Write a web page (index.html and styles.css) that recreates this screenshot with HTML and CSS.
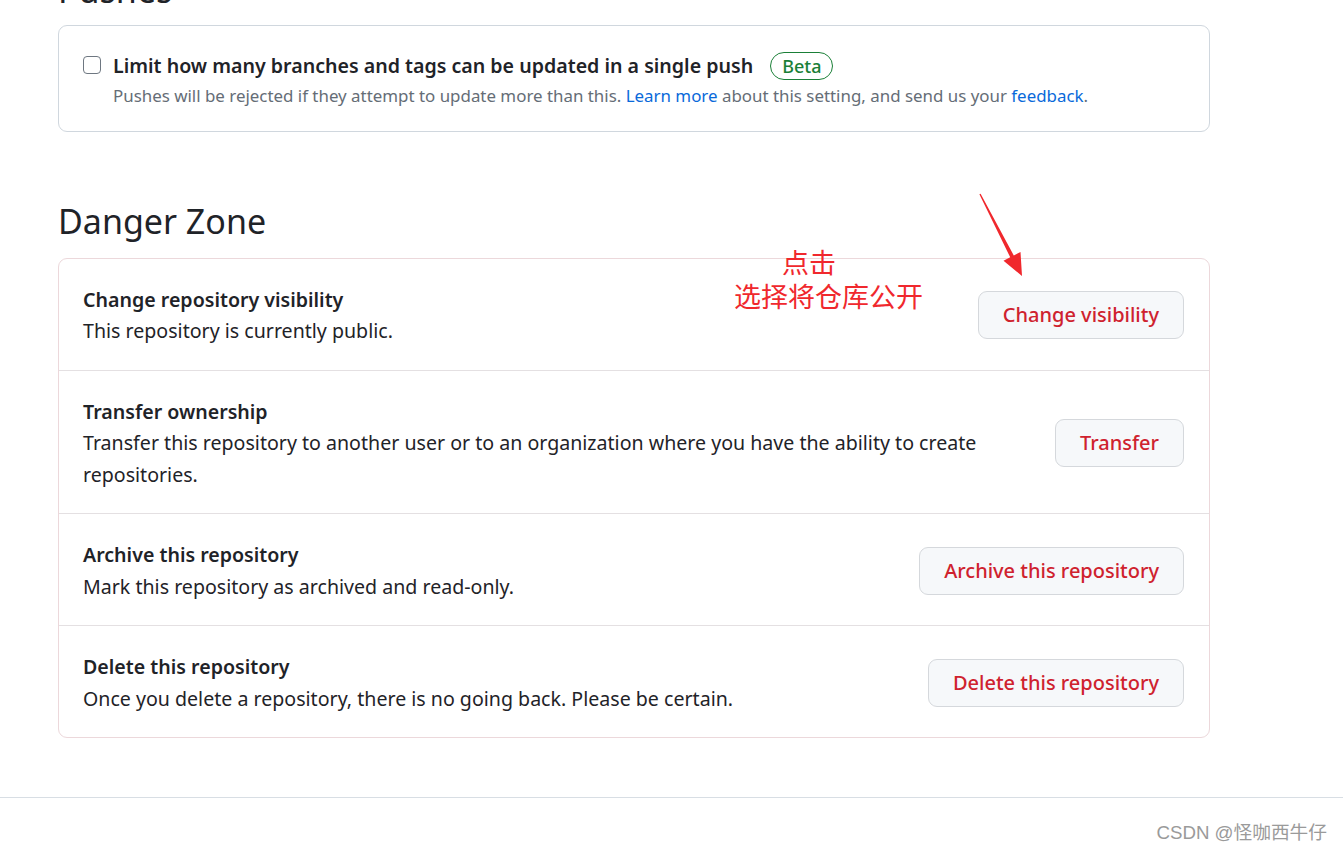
FILE: index.html
```html
<!DOCTYPE html>
<html lang="en">
<head>
<meta charset="utf-8">
<title>Settings</title>
<link rel="stylesheet" href="styles.css">
</head>
<body>
<div class="page">
  <main class="content">
    <h2 class="subhead subhead-first">Pushes</h2>
    <div class="box">
      <div class="check-row">
        <span class="checkbox"></span>
        <div class="check-body">
          <div class="check-label">Limit how many branches and tags can be updated in a single push <span class="badge">Beta</span></div>
          <div class="check-note">Pushes will be rejected if they attempt to update more than this. <a class="link" href="#">Learn more</a> about this setting, and send us your <a class="link" href="#">feedback</a>.</div>
        </div>
      </div>
    </div>

    <h2 class="subhead">Danger Zone</h2>
    <div class="box danger">
      <div class="row">
        <div class="row-text">
          <div class="row-title">Change repository visibility</div>
          <div class="row-desc">This repository is currently public.</div>
        </div>
        <button class="btn">Change visibility</button>
      </div>
      <div class="row">
        <div class="row-text">
          <div class="row-title">Transfer ownership</div>
          <div class="row-desc">Transfer this repository to another user or to an organization where you have the ability to create repositories.</div>
        </div>
        <button class="btn">Transfer</button>
      </div>
      <div class="row">
        <div class="row-text">
          <div class="row-title">Archive this repository</div>
          <div class="row-desc">Mark this repository as archived and read-only.</div>
        </div>
        <button class="btn">Archive this repository</button>
      </div>
      <div class="row">
        <div class="row-text">
          <div class="row-title">Delete this repository</div>
          <div class="row-desc">Once you delete a repository, there is no going back. Please be certain.</div>
        </div>
        <button class="btn">Delete this repository</button>
      </div>
    </div>
  </main>
  <footer class="footer"></footer>

  <div class="note">
    <div class="note-line note-first">点击</div>
    <div class="note-line">选择将仓库公开</div>
  </div>
  <svg class="arrow" width="70" height="100" viewBox="0 0 70 100">
    <polygon points="19.4,4.3 20.6,3.7 53.8,65.5 60.5,62 62,86 43.5,70.8 50.2,67.3" fill="#f0282d"/>
  </svg>
  <div class="watermark">CSDN @怪咖西牛仔</div>
</div>
</body>
</html>
```

FILE: styles.css
```css
* { box-sizing: border-box; }
html, body { margin: 0; padding: 0; background: #ffffff; }
body {
  font-family: "Noto Sans", "Open Sans", "Noto Sans CJK SC", sans-serif;
  color: #1f2328;
  font-size: 19.6px;
  line-height: 31.5px;
  overflow: hidden;
}
.page {
  position: relative;
  width: 1343px;
  height: 853px;
  overflow: hidden;
}
.content {
  width: 1152px;
  margin-left: 58px;
  margin-top: -32px;
}
.subhead {
  font-size: 34px;
  font-weight: 400;
  line-height: 45px;
  margin: 67px 0 14px 0;
  color: #1f2328;
}
.subhead-first { margin-top: 0; margin-bottom: 12px; }
.box {
  border: 1px solid #d0d7de;
  border-radius: 9px;
  background: #fff;
}
.check-row {
  display: flex;
  align-items: flex-start;
  gap: 12px;
  padding: 24px 24px 22px 24px;
}
.checkbox {
  flex: none;
  width: 18px;
  height: 18px;
  border: 1.5px solid #6e7781;
  border-radius: 4px;
  margin-top: 6px;
}
.check-label {
  font-weight: 600;
  display: flex;
  align-items: center;
  gap: 17px;
}
.badge {
  display: inline-block;
  font-size: 18px;
  font-weight: 500;
  color: #1a7f37;
  border: 1.5px solid #1a7f37;
  border-radius: 999px;
  padding: 0 11px;
  line-height: 26px;
}
.check-note {
  font-size: 16.9px;
  line-height: 27px;
  color: #656d76;
}
.link { color: #0969da; text-decoration: none; }
.danger { border-color: #ecd8db; }
.row {
  display: flex;
  align-items: center;
  gap: 24px;
  padding: 25px 25px 23px 24px;
  border-top: 1px solid #e4e0e2;
}
.row:first-child { border-top: none; }
.row-text { flex: 1; }
.row-title { font-weight: 600; }
.btn {
  flex: none;
  font-family: inherit;
  font-size: 20px;
  font-weight: 500;
  color: #cf222e;
  background: #f6f8fa;
  border: 1.5px solid #d5d8dc;
  border-radius: 9px;
  height: 48px;
  padding: 0 24px;
  line-height: 46px;
}
.footer {
  margin-top: 59px;
  border-top: 1px solid #d8dee4;
}
.note {
  position: absolute;
  left: 734px;
  top: 245px;
  color: #f0282d;
  font-family: "Noto Sans CJK SC", sans-serif;
  font-size: 27px;
  line-height: 34px;
}
.note-line { height: 34px; }
.note-first { padding-left: 48px; }
.arrow {
  position: absolute;
  left: 960px;
  top: 190px;
}
.watermark {
  position: absolute;
  right: 16px;
  bottom: 5px;
  font-family: "Liberation Sans", "Noto Sans CJK SC", sans-serif;
  font-size: 18.7px;
  color: #9a9a9a;
}
```
